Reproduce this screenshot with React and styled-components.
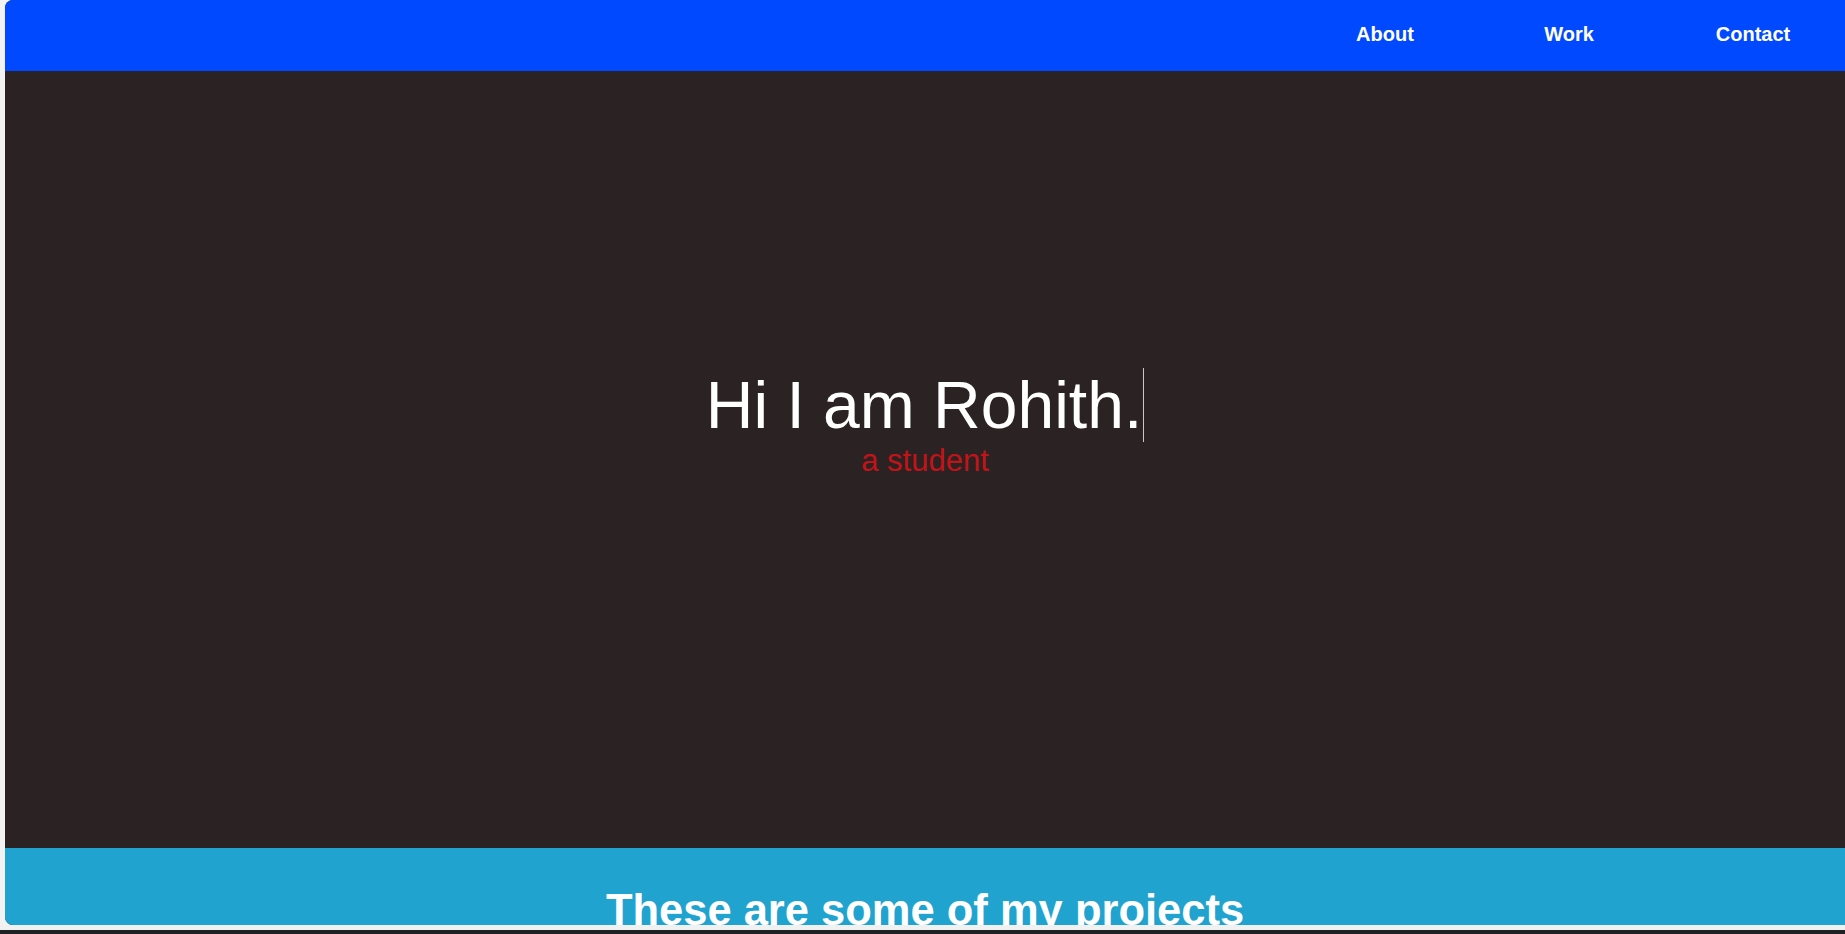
import React from "react";
import styled, { createGlobalStyle } from "styled-components";

const Global = createGlobalStyle`
  html, body {
    margin: 0;
    padding: 0;
    background: #f3f3f3;
    overflow: hidden;
  }
  body {
    font-family: "Liberation Sans", Arial, sans-serif;
  }
  * { box-sizing: border-box; }
`;

const Screen = styled.div`
  width: 1845px;
  height: 934px;
  display: flex;
  flex-direction: column;
  background: #f3f3f3;
`;

const Frame = styled.div`
  display: flex;
  padding-left: 5px;
  height: 925px;
`;

const Viewport = styled.div`
  flex: 1;
  display: flex;
  flex-direction: column;
  border-radius: 8px 0 0 8px;
  overflow: hidden;
  background: #2b2223;
`;

const Gap = styled.div`
  height: 5px;
  background: #f1f1f1;
`;

const Taskbar = styled.div`
  flex: 1;
  background: #202124;
`;

const Nav = styled.nav`
  height: 71px;
  flex-shrink: 0;
  background: #0049ff;
  display: flex;
  justify-content: flex-end;
  align-items: center;
  padding-bottom: 3px;
`;

const NavItem = styled.a`
  width: 10%;
  text-align: center;
  color: #ffffff;
  font-weight: 700;
  font-size: 20px;
  text-decoration: none;
  font-family: "Liberation Sans", Arial, sans-serif;
`;

const Hero = styled.section`
  height: 777px;
  flex-shrink: 0;
  background: #2b2223;
  padding-top: 296px;
  text-align: center;
`;

const Title = styled.h1`
  margin: 0;
  font-weight: 400;
  font-size: 66px;
  line-height: normal;
  color: #ffffff;
`;

const Typed = styled.span`
  border-right: 1.5px solid #c8c8c8;
  padding-right: 1px;
`;

const Role = styled.p`
  margin: 0;
  font-size: 31px;
  line-height: normal;
  color: #c21418;
`;

const Projects = styled.section`
  flex: 1;
  background: #21a3d0;
  padding-top: 38px;
  text-align: center;
`;

const ProjectsTitle = styled.h2`
  margin: 0;
  font-size: 43.5px;
  font-weight: 700;
  line-height: normal;
  color: #ffffff;
`;

export default function App() {
  return (
    <>
      <Global />
      <Screen>
        <Frame>
          <Viewport>
            <Nav>
              <NavItem href="#about">About</NavItem>
              <NavItem href="#work">Work</NavItem>
              <NavItem href="#contact">Contact</NavItem>
            </Nav>
            <Hero>
              <Title>
                <Typed>Hi I am Rohith.</Typed>
              </Title>
              <Role>a student</Role>
            </Hero>
            <Projects>
              <ProjectsTitle>These are some of my projects</ProjectsTitle>
            </Projects>
          </Viewport>
        </Frame>
        <Gap />
        <Taskbar />
      </Screen>
    </>
  );
}
